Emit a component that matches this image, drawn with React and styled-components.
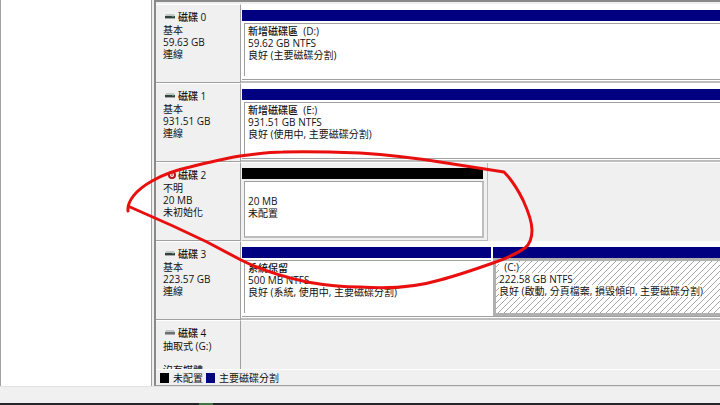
import React from 'react';
import styled, { createGlobalStyle, css } from 'styled-components';

const color = {
  face: '#f0f0f0',
  line: '#a0a0a0',
  softLine: '#bdbdbd',
  navy: '#000080',
  black: '#000000',
  text: '#101010',
  pen: '#ea0f0f',
};

const disks = [
  {
    name: '磁碟 0',
    lines: ['基本', '59.63 GB', '連線'],
    icon: 'online',
    volumes: [
      { name: '新增磁碟區  (D:)', lines: ['59.62 GB NTFS', '良好 (主要磁碟分割)'] },
    ],
  },
  {
    name: '磁碟 1',
    lines: ['基本', '931.51 GB', '連線'],
    icon: 'online',
    volumes: [
      {
        name: '新增磁碟區  (E:)',
        lines: ['931.51 GB NTFS', '良好 (使用中, 主要磁碟分割)'],
      },
    ],
  },
  {
    name: '磁碟 2',
    lines: ['不明', '20 MB', '未初始化'],
    icon: 'unknown',
    volumes: [{ lines: ['20 MB', '未配置'], width: 246, unallocated: true }],
  },
  {
    name: '磁碟 3',
    lines: ['基本', '223.57 GB', '連線'],
    icon: 'online',
    volumes: [
      {
        name: '系統保留',
        lines: ['500 MB NTFS', '良好 (系統, 使用中, 主要磁碟分割)'],
        width: 249,
      },
      {
        name: '  (C:)',
        lines: ['222.58 GB NTFS', '良好 (啟動, 分頁檔案, 損毀傾印, 主要磁碟分割)'],
        selected: true,
      },
    ],
  },
  {
    name: '磁碟 4',
    lines: ['抽取式 (G:)', '', '沒有媒體'],
    icon: 'removable',
    volumes: [],
  },
];

const GlobalStyle = createGlobalStyle`
  * {
    box-sizing: border-box;
  }
  body {
    margin: 0;
    background: ${color.face};
    color: ${color.text};
    font-family: 'Open Sans', 'Noto Sans CJK TC', sans-serif;
    font-size: 10px;
    line-height: 12px;
  }
  p, h2, ul {
    margin: 0;
    padding: 0;
    font-size: inherit;
    list-style: none;
  }
`;

const Window = styled.div`
  position: relative;
  display: flex;
  flex-direction: column;
  height: 100vh;
  overflow: hidden;
`;

const Workspace = styled.div`
  display: flex;
  flex: 1;
  min-height: 0;
  gap: 2px;
`;

const TreePane = styled.aside`
  flex: 0 0 152px;
  margin-bottom: -1px;
  background: #fff;
  border: 1px solid ${color.line};
  border-top: 0;
`;

const DiskPane = styled.main`
  display: flex;
  flex: 1;
  flex-direction: column;
  min-width: 0;
  border-top: 2px solid #8a8a8a;
  border-left: 2px solid #8a8a8a;
  border-bottom: 1px solid ${color.line};
`;

const DiskList = styled.div`
  flex: 1;
  min-height: 0;
  overflow: hidden;
  padding-top: 2px;
  border-bottom: 1px solid #fff;
`;

const DiskRow = styled.section`
  display: flex;
  height: 79px;
`;

const DiskLabel = styled.div`
  flex: 0 0 85px;
  padding: 6px 0 0 7px;
  border-top: 1px solid #fff;
  border-right: 1px solid ${color.line};
  border-bottom: 1px solid ${color.line};
`;

const DiskName = styled.h2`
  display: flex;
  align-items: center;
  gap: 2px;
  margin-bottom: 1px;
  padding-left: 1px;
  font-weight: 500;
`;

const Graph = styled.div`
  display: flex;
  flex: 1;
  min-width: 0;
  padding-left: 1px;
  border-top: 1px solid #fff;
  ${(props) =>
    props.$filled &&
    css`
      background: #fff;
      border-bottom: 2px solid ${color.softLine};
    `}
`;

const Volume = styled.article`
  display: flex;
  flex-direction: column;
  flex: ${(props) => (props.$width ? `0 0 ${props.$width}px` : '1')};
  min-width: 0;
  margin-bottom: 1px;
  padding-top: 5px;
  border-bottom: 1px solid ${color.line};
  ${(props) =>
    props.$unallocated &&
    css`
      margin-bottom: 0;
      padding: 5px 3px 2px 0;
      border-right: 1px solid ${color.softLine};
      border-bottom-color: ${color.softLine};
    `}
  & + & {
    padding-left: 2px;
  }
`;

const Bar = styled.div`
  flex: 0 0 11px;
  background: ${(props) => (props.$unallocated ? color.black : color.navy)};
  margin-right: ${(props) => (props.$unallocated ? '1px' : '0')};
`;

const VolumeBox = styled.div`
  flex: 1;
  margin: 2px 0 3px 2px;
  padding: 1px 0 0 3px;
  background: #fff;
  border: 1px solid ${color.line};
  border-width: 1px 0 0 1px;
  white-space: pre;
  overflow: hidden;
  ${(props) =>
    props.$unallocated &&
    css`
      margin-bottom: 0;
      padding-top: 13px;
      border-width: 1px 2px 2px 1px;
      border-right-color: ${color.softLine};
      border-bottom-color: ${color.softLine};
    `}
  ${(props) =>
    props.$selected &&
    css`
      margin: 0;
      padding: 0 0 0 3px;
      border: 3px solid #b0b0b0;
      border-right: 0;
      background: linear-gradient(135deg, #fff 44%, #a8a8a8 44% 56%, #fff 56%);
      background-size: 6px 6px;
    `}
`;

const VolumeText = styled.p`
  width: fit-content;
  background: #fff;
  font-weight: ${(props) => (props.$name ? 500 : 400)};
`;

const Line = styled.p`
  min-height: 12px;
`;

const Legend = styled.ul`
  display: flex;
  flex: 0 0 15px;
  gap: 3px;
  padding-left: 4px;
`;

const LegendItem = styled.li`
  display: flex;
  align-items: center;
  gap: 4px;
  &::before {
    content: '';
    width: 9px;
    height: 10px;
    background: ${(props) => props.$color};
  }
`;

const StatusBar = styled.footer`
  flex: 0 0 17px;
  border-top: 1px solid #e2e2e2;
`;

const Taskbar = styled.div`
  display: flex;
  flex: 0 0 2px;
  padding-left: 199px;
  background: #25262b;
  &::before {
    content: '';
    width: 14px;
    background: #3f7542;
  }
`;

const Marker = styled.svg`
  position: absolute;
  top: 0;
  left: 0;
  pointer-events: none;
`;

const DiskIcon = ({ type }) => {
  if (type === 'unknown') {
    return (
      <svg width="12" height="12" viewBox="0 0 12 12" aria-hidden="true">
        <path d="M1 3h7l2 2H1z" fill="#e2e2e2" />
        <circle cx="8" cy="6" r="3" fill="#fff" stroke="#b5121b" strokeWidth="2" />
        <path d="M8 3v4" fill="none" stroke="#b5121b" />
      </svg>
    );
  }
  return (
    <svg width="12" height="12" viewBox="0 0 12 12" aria-hidden="true">
      <path d="M2 3h8l1 2H1z" fill="#c3c8c7" />
      <path d="M1 5h10v2H1z" fill={type === 'online' ? '#33423d' : '#6c7072'} />
      <path d="M1 7h10v1H1z" fill="#a5a9a9" />
      {type === 'online' && <path d="M8 5h2v1H8z" fill="#3f9a62" />}
    </svg>
  );
};

function Disk({ disk }) {
  return (
    <DiskRow>
      <DiskLabel>
        <DiskName>
          <DiskIcon type={disk.icon} />
          {disk.name}
        </DiskName>
        {disk.lines.map((line, index) => (
          <Line key={index}>{line}</Line>
        ))}
      </DiskLabel>
      <Graph $filled={disk.volumes.length > 0 && !disk.volumes[0].unallocated}>
        {disk.volumes.map((volume, index) => (
          <Volume key={index} $width={volume.width} $unallocated={volume.unallocated}>
            <Bar $unallocated={volume.unallocated} />
            <VolumeBox $selected={volume.selected} $unallocated={volume.unallocated}>
              {volume.name && <VolumeText $name>{volume.name}</VolumeText>}
              {volume.lines.map((line) => (
                <VolumeText key={line}>{line}</VolumeText>
              ))}
            </VolumeBox>
          </Volume>
        ))}
      </Graph>
    </DiskRow>
  );
}

function App() {
  return (
    <>
      <GlobalStyle />
      <Window>
        <Workspace>
          <TreePane />
          <DiskPane>
            <DiskList>
              {disks.map((disk) => (
                <Disk key={disk.name} disk={disk} />
              ))}
            </DiskList>
            <Legend>
              <LegendItem $color={color.black}>未配置</LegendItem>
              <LegendItem $color={color.navy}>主要磁碟分割</LegendItem>
            </Legend>
          </DiskPane>
        </Workspace>
        <StatusBar />
        <Taskbar />
        {/* hand drawn circle around disk 2 */}
        <Marker width="720" height="405" viewBox="0 0 720 405" aria-hidden="true">
          <path
            d="M128 211C127 201 136 190 152 181C164 174 176 170 190 167C206 163 222 159 240 156C254 154 268 152 283 152C310 151 335 152 360 153C390 155 415 158 440 162L504 172C512 180 518 190 523 200C528 211 532 221 532 230C532 238 530 244 525 248C516 254 505 259 493 263C476 269 459 275 440 280C413 288 387 289 360 287C342 287 324 285 307 282C283 277 261 270 241 260L207 242L173 226L130 207"
            fill="none"
            stroke={color.pen}
            strokeWidth="3"
            strokeLinecap="round"
            strokeLinejoin="round"
          />
        </Marker>
      </Window>
    </>
  );
}

export default App;
